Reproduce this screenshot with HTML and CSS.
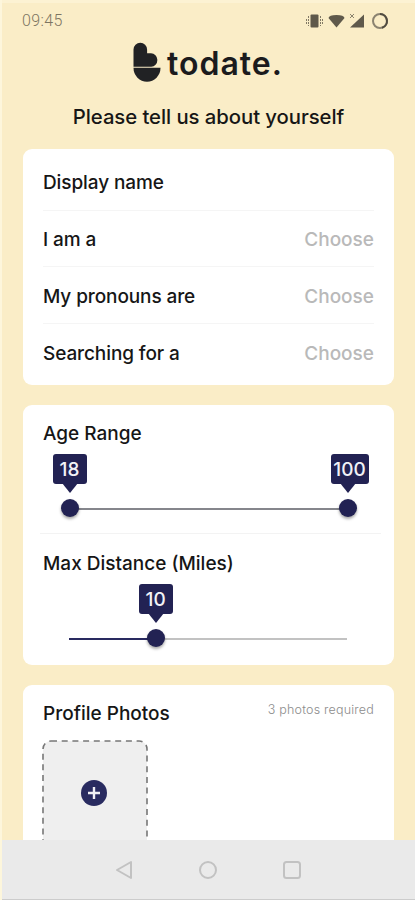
FILE: index.html
```html
<!DOCTYPE html>
<html lang="en">
<head>
  <meta charset="UTF-8" />
  <meta name="viewport" content="width=device-width, initial-scale=1.0" />
  <title>todate</title>
  <link rel="stylesheet" href="styles.css">
</head>
<body>

  <div class="screen">
    <header class="status-bar">
      <span class="time">09:45</span>
      <svg class="status-icons" width="84" height="18" viewBox="0 0 84 18">
        <g fill="#5f594b">
          <rect x="5.500" y="2.500" width="8" height="13" rx="1" />
          <path d="M23.500 6Q24 3 31.500 3T39.500 6L31.500 15.500Z" />
          <path d="M59 2.500V15.500H45Z" />
        </g>
        <path d="M3.500 4v10M15.500 4v10M1.500 7v5M17.500 7v5" stroke="#817965" stroke-width="1" stroke-dasharray="2 1" />
        <path d="M45 2l4 4M49 2l-4 4" stroke="#8b836d" stroke-width="1" />
        <circle cx="75" cy="9" r="7" fill="none" stroke="#8b8370" stroke-width="2" />
        <path d="M75 2a7 7 0 0 1 2 13.700" fill="none" stroke="#504b40" stroke-width="2" />
      </svg>
    </header>

    <div class="logo">
      <svg width="28" height="41" viewBox="0 0 28 41" fill="#212224">
        <path d="M.5 24.800V7.500a6.800 6.800 0 0 1 13.600 0V11.300H18a6.300 6.300 0 0 1 6.300 6.300V18.500a6.300 6.300 0 0 1-6 6.300Z" />
        <path d="M.5 25.800H27.500a13.500 14 0 0 1-27 0Z" />
      </svg>
      <span class="logo-text">todate<span class="dot">.</span></span>
    </div>

    <h1>Please tell us about yourself</h1>

    <main class="content">
      <section class="card details">
        <div class="row"><span class="label">Display name</span></div>
        <div class="row"><span class="label">I am a</span><span class="choose">Choose</span></div>
        <div class="row"><span class="label">My pronouns are</span><span class="choose">Choose</span></div>
        <div class="row"><span class="label">Searching for a</span><span class="choose">Choose</span></div>
      </section>

      <section class="card ranges">
        <div class="range">
          <h2>Age Range</h2>
          <div class="slider full">
            <div class="thumb" style="left: 0%"><span class="bubble">18</span></div>
            <div class="thumb" style="left: 100%"><span class="bubble wide">100</span></div>
          </div>
        </div>
        <div class="range">
          <h2>Max Distance (Miles)</h2>
          <div class="slider">
            <div class="fill" style="width: 31%"></div>
            <div class="thumb" style="left: 31%"><span class="bubble">10</span></div>
          </div>
        </div>
      </section>

      <section class="card photos">
        <div class="photos-head">
          <h2 class="photos-title">Profile Photos</h2>
          <span class="required">3 photos required</span>
        </div>
        <div class="photo-slot">
          <svg class="slot-border" width="106" height="140" viewBox="0 0 106 140">
            <rect x="1" y="1" width="104" height="150" rx="8" fill="#efefef" stroke="#777" stroke-width="1.600" stroke-dasharray="6 4.700" />
          </svg>
          <svg class="plus" width="26" height="26" viewBox="0 0 26 26">
            <circle cx="13" cy="13" r="13" fill="#292b60" />
            <path d="M13 7v12M7 13h12" stroke="#f0f0f5" stroke-width="2.400" />
          </svg>
        </div>
      </section>
    </main>

    <nav class="nav-bar">
      <svg width="18" height="20" viewBox="0 0 18 20"><path d="M16 2v16L2 10Z" /></svg>
      <svg width="18" height="20" viewBox="0 0 18 20"><circle cx="9" cy="10" r="8" /></svg>
      <svg width="18" height="20" viewBox="0 0 18 20"><rect x="1" y="2" width="16" height="16" rx="2.500" /></svg>
    </nav>
  </div>

</body>
</html>
```

FILE: styles.css
```css
* {
  box-sizing: border-box;
}

body {
  margin: 0;
  background: #fdf6dc;
  font-family: Inter, Roboto, sans-serif;
  color: #161616;
}

.screen {
  height: 900px;
  margin-left: 2px;
  display: flex;
  flex-direction: column;
  overflow: hidden;
  background: #faedc7;
  border-top: 3px solid #fcf2d3;
}

.status-bar {
  height: 35px;
  flex: none;
  padding: 0 26px 0 20px;
  display: flex;
  justify-content: space-between;
  align-items: center;
}

.time {
  font-family: Roboto, sans-serif;
  font-size: 16px;
  font-weight: 300;
  letter-spacing: 0.4px;
  color: #7d7562;
}

.logo {
  height: 48px;
  flex: none;
  padding-left: 131px;
  display: flex;
  align-items: center;
  gap: 6px;
}

.logo-text {
  padding-top: 4px;
  font-size: 32px;
  font-weight: 600;
  line-height: 40px;
  letter-spacing: 1px;
  color: #1b1b1d;
}

.logo-text .dot {
  letter-spacing: 0;
}

h1 {
  margin: 16px 0 17px;
  flex: none;
  text-align: center;
  font-size: 20.3px;
  font-weight: 450;
  line-height: 30px;
  letter-spacing: -0.05px;
}

.content {
  flex: 1;
  min-height: 0;
  overflow: hidden;
  padding: 0 21px;
  display: flex;
  flex-direction: column;
  gap: 20px;
}

.card {
  flex: none;
  background: #fff;
  border-radius: 9px;
}

.details {
  height: 235.5px;
  padding: 5px 20px 4px;
  display: grid;
  grid-template-rows: repeat(4, 1fr);
}

.row {
  padding-top: 2px;
  display: flex;
  justify-content: space-between;
  align-items: center;
  border-bottom: 1px solid #f5f5f5;
}

.row:last-child {
  border-bottom: none;
}

.label,
h2 {
  font-size: 19px;
  font-weight: 500;
  letter-spacing: -0.1px;
}

.choose {
  font-size: 19px;
  font-weight: 500;
  color: #b9b9b9;
}

h2 {
  margin: 0;
  line-height: 24px;
}

.photos-title {
  letter-spacing: 0;
}

.ranges {
  height: 260px;
  padding: 0 13px 0 17px;
}

.range {
  height: 129px;
  padding: 17px 34px 0 3px;
  border-bottom: 1px solid #f3f3f3;
}

.range h2 {
  font-weight: 450;
  letter-spacing: 0;
}

.range + .range {
  height: 130px;
  padding-top: 18px;
  border-bottom: none;
}

.slider {
  position: relative;
  height: 2px;
  margin: 62px 0 0 26px;
  background: #c2c2c2;
}

.slider.full {
  background: #85868c;
}

.fill {
  height: 2px;
  background: #292a60;
}

/* knob and value bubble sit on top of the rail */
.thumb {
  position: absolute;
  top: -9px;
  width: 18px;
  height: 18px;
  margin-left: -8.5px;
  border-radius: 50%;
  background: #222253;
  box-shadow: 0 2px 3px rgba(0, 0, 0, 0.35);
}

.bubble {
  position: absolute;
  bottom: 33px;
  left: 50%;
  width: 34px;
  height: 30px;
  margin-left: -17px;
  border-radius: 3px;
  background: #222253;
  color: #f2f2f7;
  font-size: 19px;
  font-weight: 450;
  line-height: 32px;
  text-align: center;
}

.bubble.wide {
  width: 38px;
  margin-left: -17px;
}

.bubble::after {
  content: "";
  position: absolute;
  top: 29px;
  left: 9px;
  border: 8px solid transparent;
  border-top: 10px solid #222253;
  border-bottom: none;
}

.photos {
  height: 240px;
  padding: 17px 20px 16px;
}

.photos-head {
  display: flex;
  justify-content: space-between;
}

.required {
  font-size: 12.5px;
  font-weight: 300;
  line-height: 15px;
  letter-spacing: 0.2px;
  color: #8c8c8c;
}

.photo-slot {
  position: relative;
  width: 106px;
  height: 140px;
  margin: 14px 0 0 -1px;
}

.slot-border {
  display: block;
}

.plus {
  position: absolute;
  left: 39px;
  top: 40px;
}

.nav-bar {
  height: 60px;
  flex: none;
  padding-left: 113px;
  display: flex;
  align-items: center;
  gap: 66px;
  background: #eaeaea;
  border-bottom: 1px solid #ccc;
}

.nav-bar svg {
  fill: none;
  stroke: #c2c2c2;
  stroke-width: 2;
  stroke-linejoin: round;
}
```
